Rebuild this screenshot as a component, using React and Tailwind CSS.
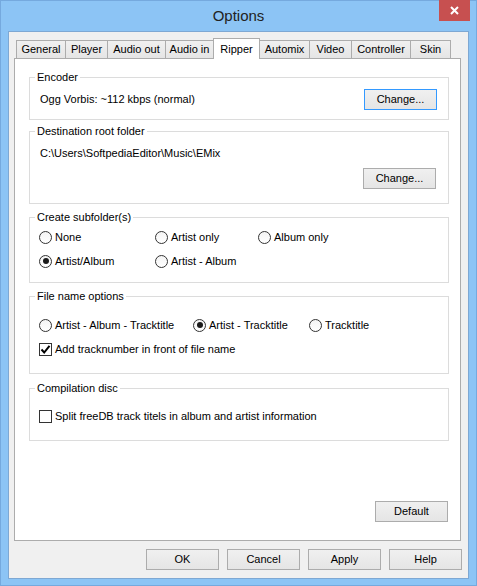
import { useState } from 'react'

const FONT = { fontFamily: '"Liberation Sans", Arial, sans-serif' }

const tabs = [
  { label: 'General', w: 'w-[50px]' },
  { label: 'Player', w: 'w-[43px]' },
  { label: 'Audio out', w: 'w-[59px]' },
  { label: 'Audio in', w: 'w-[49px]' },
  { label: 'Ripper', w: 'w-[47px]' },
  { label: 'Automix', w: 'w-[51px]' },
  { label: 'Video', w: 'w-[43px]' },
  { label: 'Controller', w: 'w-[60px]' },
  { label: 'Skin', w: 'w-[41px]' },
]

function WinButton({ children, focused, className = '' }) {
  return (
    <button
      className={
        'flex h-[21px] w-[73px] items-center justify-center border bg-gradient-to-b from-[#f0f0f0] to-[#e5e5e5] text-[11px] text-black ' +
        (focused ? 'border-[#3399ff] ' : 'border-[#acacac] ') +
        className
      }
    >
      {children}
    </button>
  )
}

function Radio({ label, checked }) {
  return (
    <label className="flex h-[16px] items-center gap-[3px] whitespace-nowrap">
      <span className="flex h-[13px] w-[13px] items-center justify-center rounded-full border border-[#333] bg-gradient-to-b from-[#f4f4f4] to-white">
        {checked && <span className="h-[6px] w-[6px] rounded-full bg-[#1a1a1a]" />}
      </span>
      <span>{label}</span>
    </label>
  )
}

function Check({ label, checked }) {
  return (
    <label className="flex h-[16px] items-center gap-[3px] whitespace-nowrap">
      <span className="flex h-[13px] w-[13px] items-center justify-center border border-[#333] bg-white">
        {checked && (
          <svg width="11" height="11" viewBox="0 0 11 11">
            <path d="M1.5 5.5 L4.2 8.5 L9.5 1.8" fill="none" stroke="#000" strokeWidth="2" />
          </svg>
        )}
      </span>
      <span>{label}</span>
    </label>
  )
}

function Group({ title, h, className = '', children }) {
  return (
    <fieldset className={'border border-[#dcdcdc] ' + h + ' ' + className}>
      <legend className="ml-[5px] px-[2px] leading-[16px]">{title}</legend>
      {children}
    </fieldset>
  )
}

export default function App() {
  const [active] = useState('Ripper')

  return (
    <div
      className="flex h-[586px] w-[477px] flex-col border border-[#75a9de] bg-[#8cc4f5] text-[11px] text-black"
      style={FONT}
    >
      {/* Title bar */}
      <div className="relative flex h-[30px] items-center justify-center text-[15px] text-[#222]">
        Options
        <div className="absolute right-[6px] top-[-1px] flex h-[21px] w-[31px] items-center justify-center bg-[#c75050]">
          <svg width="9" height="9" viewBox="0 0 9 9">
            <path d="M1 1 L8 8 M8 1 L1 8" stroke="#fff" strokeWidth="2" />
          </svg>
        </div>
      </div>

      {/* Client area */}
      <div className="mx-[7px] flex h-[548px] flex-col border border-[#7ea8d3] bg-[#f0f0f0]">
        {/* Tabs */}
        <div className="flex h-[26px] items-end pl-[7px] pt-[6px]">
          {tabs.map((t, i) => {
            const sel = t.label === active
            return (
              <div
                key={t.label}
                className={
                  'flex items-center justify-center whitespace-nowrap border border-b-0 border-[#acacac] ' +
                  t.w +
                  (i > 0 ? ' -ml-px' : '') +
                  (sel
                    ? ' relative z-10 -mb-px h-[21px] bg-white'
                    : ' h-[18px] bg-gradient-to-b from-[#f0f0f0] to-[#e5e5e5]')
                }
              >
                {t.label}
              </div>
            )
          })}
        </div>

        {/* Panel */}
        <div className="ml-[5px] mr-[7px] flex h-[483px] flex-col border border-[#acacac] bg-white pl-[14px] pr-[11px] pt-[10px]">
          <Group title="Encoder" h="h-[51px]">
            <div className="flex h-[21px] items-center justify-between pl-[10px] pr-[11px] mt-[4px]">
              <span>Ogg Vorbis: ~112 kbps (normal)</span>
              <WinButton focused>Change...</WinButton>
            </div>
          </Group>

          <Group title="Destination root folder" h="h-[81px]" className="mt-[3px]">
            <div className="flex flex-col pl-[10px] pr-[12px] pt-[6px]">
              <span className="leading-[16px]">C:\Users\SoftpediaEditor\Music\EMix</span>
              <div className="mt-[7px] flex justify-end">
                <WinButton>Change...</WinButton>
              </div>
            </div>
          </Group>

          <Group title="Create subfolder(s)" h="h-[74px]" className="mt-[5px]">
            <div className="grid grid-cols-[116px_103px_1fr] gap-y-[8px] pl-[9px] pt-[4px]">
              <Radio label="None" />
              <Radio label="Artist only" />
              <Radio label="Album only" />
              <Radio label="Artist/Album" checked />
              <Radio label="Artist - Album" />
            </div>
          </Group>

          <Group title="File name options" h="h-[86px]" className="mt-[5px]">
            <div className="flex flex-col gap-y-[8px] pl-[9px] pt-[13px]">
              <div className="grid grid-cols-[154px_116px_1fr]">
                <Radio label="Artist - Album - Tracktitle" />
                <Radio label="Artist - Tracktitle" checked />
                <Radio label="Tracktitle" />
              </div>
              <Check label="Add tracknumber in front of file name" checked />
            </div>
          </Group>

          <Group title="Compilation disc" h="h-[61px]" className="mt-[6px]">
            <div className="pl-[9px] pt-[12px]">
              <Check label="Split freeDB track titels in album and artist information" />
            </div>
          </Group>

          <div className="mt-[60px] flex justify-end pr-px">
            <WinButton>Default</WinButton>
          </div>
        </div>

        {/* Bottom buttons */}
        <div className="mt-[8px] flex justify-end gap-[8px] pr-[6px]">
          <WinButton>OK</WinButton>
          <WinButton>Cancel</WinButton>
          <WinButton>Apply</WinButton>
          <WinButton>Help</WinButton>
        </div>
      </div>
    </div>
  )
}
